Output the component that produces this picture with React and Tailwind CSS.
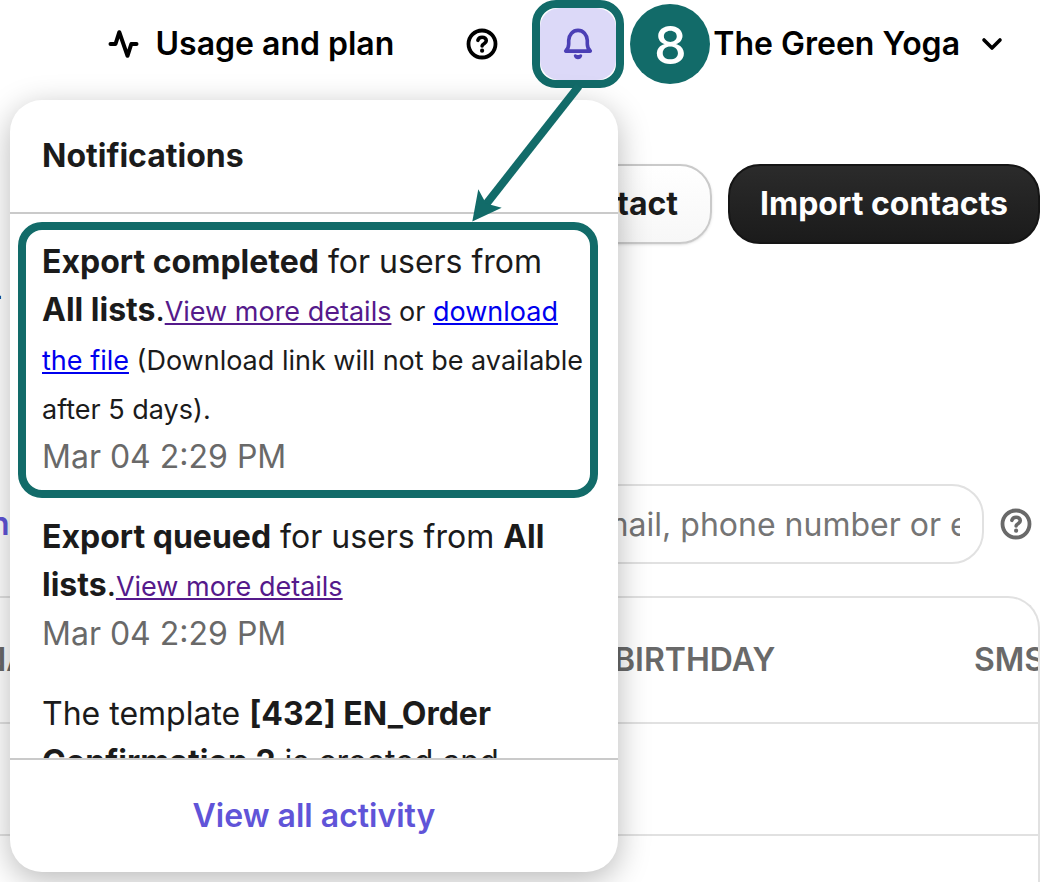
import React from "react";

const HelpIcon = ({ className }) => (
  <svg viewBox="0 0 32 32" className={className} fill="none" stroke="currentColor" strokeWidth="3.8" strokeLinecap="round" strokeLinejoin="round" aria-hidden="true">
    <circle cx="16" cy="16" r="13.5" />
    <path d="M11.900 12.300c.5-1.900 2.200-3.100 4.200-3.100 2.400 0 4.200 1.500 4.200 3.600 0 2.800-4.200 2.900-4.200 5.200" strokeWidth="3.600" />
    <circle cx="16.100" cy="22.700" r="2.100" fill="currentColor" stroke="none" />
  </svg>
);

const Header = () => (
  <header className="relative flex h-[88px] items-center justify-end pr-12 text-black">
    <button type="button" className="flex shrink-0 items-center gap-4">
      <svg viewBox="0 0 32 32" className="size-8" fill="none" stroke="currentColor" strokeWidth="4" strokeLinecap="round" strokeLinejoin="round" aria-hidden="true">
        <path d="M2.500 16h5L11.300 4.200 19.500 27.800 23.300 16H28.500" />
      </svg>
      Usage and plan
    </button>
    <button type="button" aria-label="Help" className="ml-[72px] shrink-0">
      <HelpIcon className="size-8" />
    </button>
    <div className="ml-[34px] shrink-0 rounded-3xl border-8 border-[#126b69]">
      <button type="button" aria-label="Notifications" className="flex h-[72px] w-[76px] items-center justify-center rounded-[20px] bg-[#dcd9f8] text-[#4b3fb5]">
        <svg viewBox="0 0 32 32" className="size-8" fill="none" stroke="currentColor" strokeWidth="3.6" strokeLinecap="round" strokeLinejoin="round" aria-hidden="true">
          <path d="M3.700 23.100h24.600c-2-1.900-3-3.800-3-7.100v-3.600C25 6.500 21.200 2.400 16 2.400S7 6.500 6.700 12.400V16c0 3.300-1 5.200-3 7.100Z" />
          <path d="M13.400 26.300c.9 0 1.300.8 2.600.8s1.700-.8 2.600-.8c1.200 0 1.900.8 1.500 2-.6 1.800-2.200 3-4.100 3s-3.500-1.200-4.100-3c-.4-1.200.3-2 1.500-2Z" fill="currentColor" stroke="none" />
        </svg>
      </button>
    </div>
    <span className="ml-1.5 flex size-20 shrink-0 items-center justify-center rounded-full bg-[#126b69] pt-1 text-[52px] font-medium text-white">
      8
    </span>
    <button type="button" className="ml-[3px] flex shrink-0 items-center gap-5">
      The Green Yoga
      <svg viewBox="0 0 24 16" className="h-4 w-6" fill="none" stroke="currentColor" strokeWidth="3.6" strokeLinecap="round" strokeLinejoin="round" aria-hidden="true">
        <path d="M4 4l8 8 8-8" />
      </svg>
    </button>
  </header>
);

const Contacts = () => (
  <main className="pr-3">
    <div className="flex justify-end gap-4 pt-[76px]">
      <button type="button" className="h-20 rounded-[32px] border-2 border-[#cacaca] bg-linear-to-b from-white to-[#f7f7f7] px-8 font-bold text-[#1b1b1b] shadow-sm">
        Create a contact
      </button>
      <button type="button" className="h-20 rounded-[32px] border-2 border-[#151515] bg-linear-to-b from-[#2b2b2b] to-[#1b1b1b] px-[30px] font-bold text-white">
        Import contacts
      </button>
    </div>
    <p className="mt-7 -ml-3 leading-[48px] text-black">-</p>
    <div className="mt-[164px] flex items-center">
      <button type="button" className="-ml-[10px] w-5 shrink-0 text-left text-[#6054d8]">n</button>
      <input
        type="text"
        aria-label="Search contacts"
        placeholder="Search by name, email, phone number or ext. ID"
        className="ml-auto h-20 w-[689px] rounded-[32px] border-2 border-[#e1e1e1] bg-white px-[22px] font-normal placeholder:text-[#757575]"
      />
      <button type="button" aria-label="Search help" className="mr-2 ml-4 shrink-0 text-[#696969]">
        <HelpIcon className="size-8" />
      </button>
    </div>
    <div className="mt-8 -ml-[103px] h-[286px] overflow-hidden rounded-tr-[32px] border-2 border-b-0 border-[#e1e1e1]">
      <table className="w-full table-fixed text-left text-[#696969]">
        <thead>
          <tr className="h-[125px] border-b-2 border-[#e1e1e1]">
            <th className="w-[715px] font-semibold">LASTNAME</th>
            <th className="w-[360px] font-semibold">BIRTHDAY</th>
            <th className="font-semibold">SMS</th>
          </tr>
        </thead>
        <tbody>
          <tr className="h-28 border-b-2 border-[#e1e1e1]"><td /><td /><td /></tr>
        </tbody>
      </table>
    </div>
  </main>
);

const Notifications = () => (
  <section aria-label="Notifications" className="absolute top-[100px] right-[434px] flex h-[772px] w-[608px] flex-col rounded-[32px] bg-white text-[#1b1b1b] shadow-[0_8px_32px_rgba(0,0,0,0.28)]">
    <h2 className="flex h-[114px] shrink-0 items-center border-b-2 border-[#cacaca] px-8 font-bold">Notifications</h2>
    <div className="min-h-0 flex-1 overflow-hidden px-2 pt-2 font-normal leading-[48px]">
      <article className="w-[580px] rounded-3xl border-8 border-[#126b69] pt-2 pb-[9px] pl-4">
        <p>
          <b className="font-bold">Export completed</b> for users from <b className="font-bold">All lists</b>.
          <span className="text-[27px] leading-[46px]">
            <a href="#details" className="text-[#551a8b] underline">View more details</a> or <a href="#download" className="text-[#0000ee] underline">download the file</a> (Download link will not be available after 5 days).
          </span>
        </p>
        <time className="block text-[#696969]">Mar 04 2:29 PM</time>
      </article>
      <article className="mt-[15px] px-6">
        <p>
          <b className="font-bold">Export queued</b> for users from <b className="font-bold">All lists</b>.
          <a href="#queued" className="text-[27px] leading-[46px] text-[#551a8b] underline">View more details</a>
        </p>
        <time className="block text-[#696969]">Mar 04 2:29 PM</time>
      </article>
      <article className="mt-8 px-6">
        <p>The template <b className="font-bold">[432] EN_Order Confirmation 2</b> is created and</p>
      </article>
    </div>
    <a href="#activity" className="flex h-[114px] shrink-0 items-center justify-center border-t-2 border-[#cacaca] text-[#6054d8]">View all activity</a>
  </section>
);

const Arrow = () => (
  <svg viewBox="0 0 112 140" className="pointer-events-none absolute top-[84px] right-[468px] h-[140px] w-28" fill="none" aria-hidden="true">
    <path d="M106.900 2 13.500 121" stroke="#126b69" strokeWidth="8" />
    <path d="M0.300 137.500 6.300 105.300 14 119.500 29.700 123.700Z" fill="#126b69" />
  </svg>
);

export default function App() {
  return (
    <div className="relative overflow-hidden bg-white font-['Inter',sans-serif] text-[32px] font-semibold">
      <Header />
      <Contacts />
      <Notifications />
      <Arrow />
    </div>
  );
}
